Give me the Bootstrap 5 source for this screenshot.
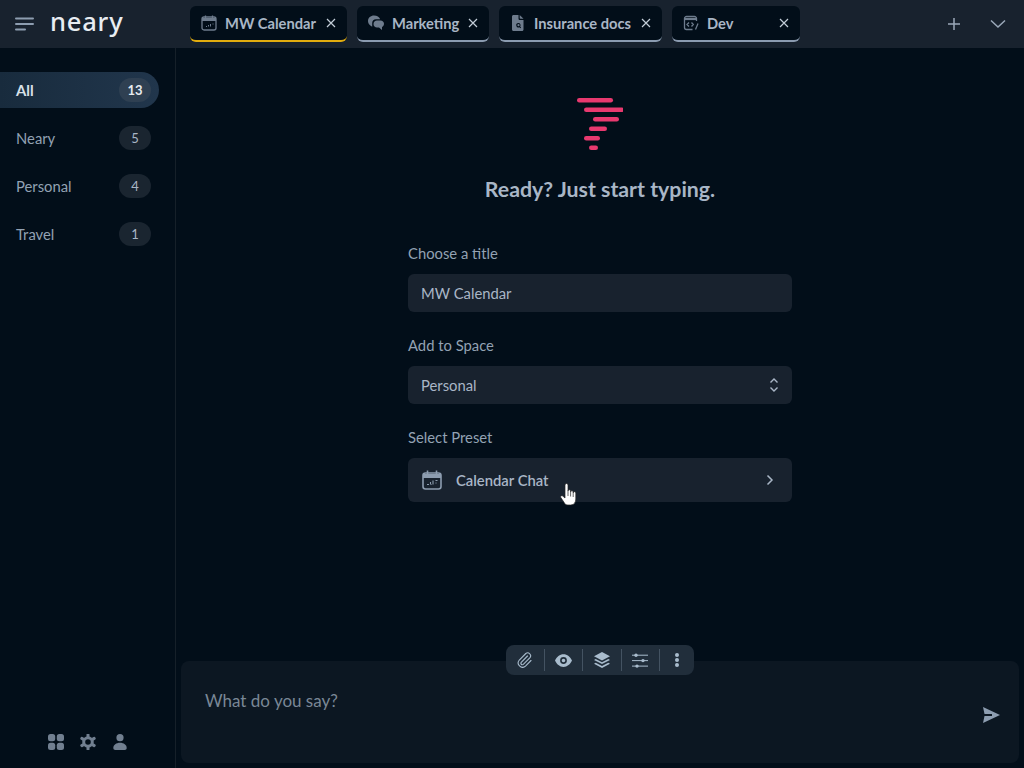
<!DOCTYPE html>
<html lang="en">
<head>
<meta charset="utf-8">
<title>Neary</title>
<link href="https://cdn.jsdelivr.net/npm/bootstrap@5.3.0/dist/css/bootstrap.min.css" rel="stylesheet">
<style>
html,body{height:100%;overflow:hidden}
body{background:#020e19;color:#a9b6c6;font-family:Lato,"Noto Sans",sans-serif;font-size:14.8px;line-height:20px}
.app-top{height:48px;background:#18222e}
.menu-zone{width:190px;padding-left:15px}
.brand-word{font-family:"Noto Sans",sans-serif;font-weight:500;font-size:25.5px;line-height:30px;color:#e8edf2;margin-left:16px;letter-spacing:.8px;position:relative;top:-3px}
.chat-tab{height:36px;background:#020e19;border-radius:6px;border-bottom:2px solid #8b9bb0;padding:0 11px 0 10px;font-weight:700;font-size:14.7px;color:#a9b6c6}
.chat-tab.is-live{border-bottom-color:#e2ac0e}
.chat-tab svg.tab-ico{width:18px;height:18px;margin-right:7px;color:#6e7c8d}
.tab-x{width:10px;height:10px;margin-left:auto;color:#c3cdd8}
.tab-one{width:157px}.tab-two{width:132px}.tab-three{width:163px}.tab-four{width:128px}
.tab-rail{gap:10px}
.top-acts{margin-left:auto;gap:29px;padding-right:18px;color:#9aa8b9}
.page-body{min-height:0}
.side-rail{width:176px;border-right:1px solid #162029}
.rail-item{height:36px;width:159px;padding:0 8px 1px 16px;margin-bottom:12px;border-radius:0 18px 18px 0;color:#93a2b3}
.rail-item.is-on{background:linear-gradient(90deg,#182b3d,#21364c);color:#d8e0e8;font-weight:700}
.rail-count{width:32px;height:24px;border-radius:12px;background:#1a2530;font-size:13px;line-height:24px;text-align:center;color:#a9b6c6;margin-bottom:-1px}
.is-on .rail-count{background:#2f4052;color:#e6ebf0}
.rail-foot{gap:16px;padding-left:48px;padding-bottom:18px;color:#717f90}
.rail-top{padding-top:24px}
.work-area{min-width:0}
.centre-col{width:384px;margin-top:50px}
.form-cap{color:#93a2b3;line-height:20px;margin-bottom:11px}
.dark-field{height:38px;background:#18222e;border-radius:6px;padding:0 13px 1px;margin-bottom:23px;color:#a9b6c6}
.dark-field.is-tall{height:44px;font-weight:600;margin-bottom:0}
.preset-ico{margin-right:13px}
.preset-go{margin-right:5px}
.hello-title{font-size:21.3px;line-height:28px;font-weight:700;color:#a9b6c6;margin:25px 0 40px}
.composer-zone{padding:0 5px 5px;position:relative}
.composer-box{height:102px;border-radius:8px;background:#0c1722;padding:30px 24px;color:#7a8796;font-size:17px;position:relative}
.tool-strip{position:absolute;left:330px;top:-16px;width:188px;height:30px;background:#212e3b;border-radius:8px;color:#a9bccd}
.tool-cell{height:22px;width:38.500px;border-right:1px solid #445362}
.tool-cell:last-child{border-right:0;width:34px}
.send-mark{position:absolute;right:19px;top:46px;color:#8d9db0}
.hand-cursor{position:absolute;left:560px;top:483px}
</style>
</head>
<body class="d-flex flex-column">
<header class="app-top d-flex align-items-center">
  <div class="menu-zone d-flex align-items-center flex-shrink-0">
    <svg width="19" height="14" viewBox="0 0 19 14" fill="none" stroke="#8d9db0" stroke-width="2" stroke-linecap="round"><path d="M1 1.500H18M1 7H18M1 12.500H10"/></svg>
    <span class="brand-word">neary</span>
  </div>
  <nav class="d-flex tab-rail">
    <div class="chat-tab is-live tab-one d-flex align-items-center">
      <svg class="tab-ico" viewBox="0 0 18 18" fill="none" stroke="currentColor" stroke-width="1.300"><rect x="2" y="3" width="14" height="13" rx="2"/><path d="M5.500 1.500V4M12.500 1.500V4"/><path d="M2 5.500H16" stroke-width="3"/><path d="M6 12.500h1M8.500 11v1.500M10.500 10v2.500M12.500 10h1" stroke-width="1"/></svg>
      <span>MW Calendar</span>
      <svg class="tab-x" viewBox="0 0 10 10" stroke="currentColor" stroke-width="1.200"><path d="M1 1L9 9M9 1L1 9"/></svg>
    </div>
    <div class="chat-tab tab-two d-flex align-items-center">
      <svg class="tab-ico" viewBox="0 0 18 18" fill="currentColor"><path d="M7 1.500c3 0 5.500 1.500 6.200 3.800H9C6.800 5.300 5.200 7 5.200 9v3.700L3.300 11.500C1.800 10.300 1 8.800 1 7c0-3.200 2.700-5.500 6-5.500z"/><path d="M10 6.500h3.500c2 0 3.500 1.500 3.500 3.300 0 1.500-.8 2.600-2 3.200v3l-3-2.500H10c-2 0-3.500-1.600-3.500-3.600 0-1.900 1.500-3.400 3.500-3.400z"/></svg>
      <span>Marketing</span>
      <svg class="tab-x" viewBox="0 0 10 10" stroke="currentColor" stroke-width="1.200"><path d="M1 1L9 9M9 1L1 9"/></svg>
    </div>
    <div class="chat-tab tab-three d-flex align-items-center">
      <svg class="tab-ico" viewBox="0 0 18 18" fill="currentColor"><path fill-rule="evenodd" d="M4.500 1H9.500V4.500C9.500 5.500 10 6 11 6H14.500v9.500c0 .8-.6 1.500-1.500 1.500H4.500c-.8 0-1.500-.7-1.500-1.500v-13C3 1.700 3.700 1 4.500 1zM9.500 9a2.200 2.200 0 1 0 .9 4.200l1 1 .7-.7-1-1A2.200 2.200 0 0 0 9.500 9zm0 1.100a1.100 1.100 0 1 1 0 2.200 1.100 1.100 0 0 1 0-2.200z"/><path d="M10.700 1L14.500 4.800H11.500c-.5 0-.8-.3-.8-.8z"/></svg>
      <span>Insurance docs</span>
      <svg class="tab-x" viewBox="0 0 10 10" stroke="currentColor" stroke-width="1.200"><path d="M1 1L9 9M9 1L1 9"/></svg>
    </div>
    <div class="chat-tab tab-four d-flex align-items-center">
      <svg class="tab-ico" viewBox="0 0 18 18" fill="none" stroke="currentColor" stroke-width="1.300"><path d="M14.500 7V4.500a2 2 0 0 0-2-2h-8a2 2 0 0 0-2 2v9a2 2 0 0 0 2 2h6"/><path d="M2.500 5h12" stroke-width="2.200"/><path d="M7 8.500L5 10.500l2 2M9.500 8.500l1.800 2-1.800 2M16 9.500l-2.500 6"/></svg>
      <span>Dev</span>
      <svg class="tab-x" viewBox="0 0 10 10" stroke="currentColor" stroke-width="1.200"><path d="M1 1L9 9M9 1L1 9"/></svg>
    </div>
  </nav>
  <div class="top-acts d-flex align-items-center">
    <svg width="14" height="14" viewBox="0 0 14 14" stroke="currentColor" stroke-width="1.500"><path d="M7 1V13M1 7H13"/></svg>
    <svg width="16" height="10" viewBox="0 0 16 10" fill="none" stroke="currentColor" stroke-width="1.500"><path d="M1 1.500L8 8L15 1.500"/></svg>
  </div>
</header>
<div class="page-body d-flex flex-grow-1">
  <aside class="side-rail d-flex flex-column flex-shrink-0">
    <div class="rail-top flex-grow-1">
      <div class="rail-item is-on d-flex align-items-center justify-content-between"><span>All</span><span class="rail-count">13</span></div>
      <div class="rail-item d-flex align-items-center justify-content-between"><span>Neary</span><span class="rail-count">5</span></div>
      <div class="rail-item d-flex align-items-center justify-content-between"><span>Personal</span><span class="rail-count">4</span></div>
      <div class="rail-item d-flex align-items-center justify-content-between"><span>Travel</span><span class="rail-count">1</span></div>
    </div>
    <div class="rail-foot d-flex align-items-center">
      <svg width="16" height="16" viewBox="0 0 16 16" fill="currentColor"><rect width="7.200" height="7.200" rx="2.500"/><rect x="8.800" width="7.200" height="7.200" rx="2.500"/><rect y="8.800" width="7.200" height="7.200" rx="2.500"/><rect x="8.800" y="8.800" width="7.200" height="7.200" rx="2.500"/></svg>
      <svg width="16" height="16" viewBox="0 0 16 16" fill="none" stroke="currentColor"><circle cx="8" cy="8" r="4.300" stroke-width="3"/><path d="M8 .8v2M8 13.200v2M1.800 4.400l1.700 1M12.500 10.600l1.700 1M1.800 11.600l1.700-1M12.500 5.400l1.700-1" stroke-width="3" stroke-linecap="round"/></svg>
      <svg width="16" height="16" viewBox="0 0 16 16" fill="currentColor"><circle cx="8" cy="3.700" r="3.600"/><path d="M1.300 14c0-3 3-5.200 6.700-5.200s6.700 2.200 6.700 5.200c0 1.200-.8 2-2 2H3.300c-1.200 0-2-.8-2-2z"/></svg>
    </div>
  </aside>
  <main class="work-area flex-grow-1 d-flex flex-column">
    <div class="flex-grow-1 d-flex justify-content-center">
      <div class="centre-col">
        <div class="text-center">
          <svg width="46" height="52" viewBox="0 0 46 52" fill="#e8396f"><rect x="0" width="36" height="4.500" rx="2.250"/><rect x="7" y="9.500" width="40" height="4.500" rx="2.250"/><rect x="16" y="19" width="26" height="4.500" rx="2.250"/><rect x="12" y="28.500" width="18" height="4.500" rx="2.250"/><rect x="7" y="38" width="16" height="4.500" rx="2.250"/><rect x="12" y="47.500" width="9" height="4.500" rx="2.250"/></svg>
          <h1 class="hello-title">Ready? Just start typing.</h1>
        </div>
        <div class="form-cap">Choose a title</div>
        <div class="dark-field d-flex align-items-center">MW Calendar</div>
        <div class="form-cap">Add to Space</div>
        <div class="dark-field d-flex align-items-center justify-content-between">
          <span>Personal</span>
          <svg width="10" height="16" viewBox="0 0 10 16" fill="none" stroke="#a9b6c6" stroke-width="1.400"><path d="M1.500 5.500L5 2L8.500 5.500M1.500 10.500L5 14L8.500 10.500"/></svg>
        </div>
        <div class="form-cap">Select Preset</div>
        <div class="dark-field is-tall d-flex align-items-center">
          <svg class="preset-ico" width="22" height="22" viewBox="0 0 22 22" fill="none" stroke="#8d9db0" stroke-width="1.600"><rect x="2" y="4" width="18" height="16" rx="2.500"/><path d="M6.500 1.500V5M15.500 1.500V5"/><path d="M2 7H20" stroke-width="4"/><path d="M6 15.500h2M9.500 15.500h1M9.500 13v2M12 11.500v4M14.500 11.500h2M14.500 14h1" stroke-width="1.100"/></svg>
          <span>Calendar Chat</span>
          <svg class="preset-go ms-auto" width="8" height="12" viewBox="0 0 8 12" fill="none" stroke="#a9b6c6" stroke-width="1.500"><path d="M1.500 1.500L6 6L1.500 10.500"/></svg>
        </div>
      </div>
    </div>
    <div class="composer-zone">
      <div class="composer-box">What do you say?
        <svg class="send-mark" width="17" height="16" viewBox="0 0 17 16" fill="currentColor"><path fill-rule="evenodd" d="M0 0L17 8L0 16L1.500 9H9V7H1.500z"/></svg>
      </div>
      <div class="tool-strip d-flex align-items-center">
        <div class="tool-cell d-flex align-items-center justify-content-center">
          <svg width="16" height="16" viewBox="0 0 16 16" fill="none" stroke="currentColor" stroke-width="1.100" stroke-linecap="round"><path d="M10.500 4L4.200 10.300a1.500 1.500 0 0 0 2.100 2.100L13 5.700a3 3 0 0 0-4.200-4.200L2.300 8a4.400 4.400 0 0 0 6.200 6.200L14 8.500"/></svg>
        </div>
        <div class="tool-cell d-flex align-items-center justify-content-center">
          <svg width="17" height="13" viewBox="0 0 16 12" fill="currentColor"><path fill-rule="evenodd" d="M8 0c3.500 0 6.500 2.500 8 6-1.500 3.500-4.500 6-8 6S1.500 9.500 0 6c1.500-3.500 4.500-6 8-6zm0 2.800a3.200 3.200 0 1 0 0 6.400 3.200 3.200 0 0 0 0-6.400zm0 1.500a1.700 1.700 0 1 1 0 3.400 1.700 1.700 0 0 1 0-3.400z"/></svg>
        </div>
        <div class="tool-cell d-flex align-items-center justify-content-center">
          <svg width="16" height="16" viewBox="0 0 16 16" fill="currentColor"><path d="M8 0l8 4.200-8 4.200-8-4.200z"/><path d="M1.700 6.900L8 10.200l6.300-3.300L16 7.900 8 12 0 7.900z"/><path d="M1.700 10.700L8 14l6.300-3.300L16 11.700 8 16 0 11.700z"/></svg>
        </div>
        <div class="tool-cell d-flex align-items-center justify-content-center">
          <svg width="16" height="15" viewBox="0 0 16 15" fill="currentColor"><rect y="1.700" width="16" height="1"/><rect y="7.100" width="16" height="1"/><rect y="12.600" width="16" height="1"/><circle cx="4" cy="2.200" r="1.700"/><circle cx="11" cy="7.600" r="1.700"/><circle cx="5" cy="13.100" r="1.700"/></svg>
        </div>
        <div class="tool-cell d-flex align-items-center justify-content-center">
          <svg width="4" height="14" viewBox="0 0 4 14" fill="currentColor"><circle cx="2" cy="2" r="2"/><circle cx="2" cy="7" r="2"/><circle cx="2" cy="12" r="2"/></svg>
        </div>
      </div>
    </div>
  </main>
</div>
<svg class="hand-cursor" width="17" height="23" viewBox="0 0 17 23"><path fill="#fff" stroke="#222" stroke-width=".7" d="M5 2a1.500 1.500 0 0 1 3 0V8a1.300 1.300 0 0 1 2.600 0V9a1.300 1.300 0 0 1 2.600 0v1a1.300 1.300 0 0 1 2.600 0v6c0 3-1.500 6-5 6H7.800c-2 0-3-1-4-3L.8 14.500c-.8-1.200.8-2.600 2-1.400L5 15z"/><path stroke="#222" stroke-width=".7" d="M8 8v5M10.600 9v4.500M13.200 10v4"/></svg>
</body>
</html>
